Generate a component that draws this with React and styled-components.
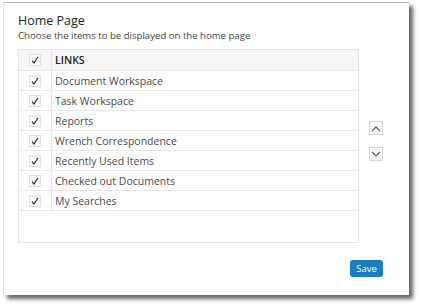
import React from "react";
import styled, { createGlobalStyle } from "styled-components";

const Global = createGlobalStyle`
  html, body { margin: 0; padding: 0; background: #fff; }
  body { font-family: "Open Sans", "Liberation Sans", sans-serif; }
`;

const Page = styled.div`
  width: 423px;
  height: 308px;
  padding: 2px 0 0 3px;
  box-sizing: border-box;
`;

const Panel = styled.div`
  width: 406px;
  height: 293px;
  box-sizing: border-box;
  background: #fff;
  border-top: 1px solid #b5b5b5;
  border-left: 1px solid #e2e2e2;
  box-shadow: 4px 4px 4px rgba(0, 0, 0, 0.6);
  padding: 9px 0 0 14px;
  display: flex;
  flex-direction: column;
`;

const Title = styled.div`
  font-size: 12.5px;
  line-height: 17px;
  color: #222;
  font-weight: 500;
`;

const Subtitle = styled.div`
  font-size: 9.6px;
  line-height: 13px;
  color: #444;
  margin-bottom: 7px;
`;

const Body = styled.div`
  display: flex;
  align-items: flex-start;
`;

const Table = styled.div`
  width: 341px;
  height: 194px;
  box-sizing: border-box;
  border: 1px solid #e4e4e4;
  display: flex;
  flex-direction: column;
`;

const Row = styled.div`
  display: flex;
  height: ${(p) => (p.$header ? 21 : 20)}px;
  flex: 0 0 auto;
  border-bottom: 1px solid #e8e8e8;
  background: ${(p) => (p.$header ? "#f6f6f6" : "#fff")};
  box-sizing: border-box;
`;

const CheckCell = styled.div`
  width: 32px;
  flex: 0 0 32px;
  border-right: 1px solid #e4e4e4;
  display: flex;
  align-items: center;
  justify-content: center;
`;

const Box = styled.span`
  width: 12px;
  height: 12px;
  box-sizing: border-box;
  border: 1px solid #e0e0e0;
  background: #fafafa;
  display: flex;
  align-items: center;
  justify-content: center;
`;

const LabelCell = styled.div`
  flex: 1;
  display: flex;
  align-items: center;
  padding-left: 3px;
  font-size: 10.5px;
  font-weight: ${(p) => (p.$header ? 600 : 400)};
  color: ${(p) => (p.$header ? "#222" : "#4a4a4a")};
`;

const Arrows = styled.div`
  display: flex;
  flex-direction: column;
  gap: 12px;
  margin: 72px 0 0 10px;
`;

const ArrowBtn = styled.div`
  width: 14px;
  height: 14px;
  box-sizing: border-box;
  border: 1px solid #d4d4d4;
  background: #fafafa;
  display: flex;
  align-items: center;
  justify-content: center;
`;

const Footer = styled.div`
  display: flex;
  justify-content: flex-end;
  width: 365px;
  margin-top: 17px;
`;

const SaveButton = styled.button`
  width: 33px;
  height: 17px;
  padding: 0;
  border: none;
  border-radius: 3px;
  background: #1a7cc1;
  color: #fff;
  font-family: "Open Sans", "Liberation Sans", sans-serif;
  font-size: 9.5px;
  line-height: 17px;
`;

const items = [
  "Document Workspace",
  "Task Workspace",
  "Reports",
  "Wrench Correspondence",
  "Recently Used Items",
  "Checked out Documents",
  "My Searches",
];

const Check = () => (
  <svg width="8" height="8" viewBox="0 0 8 8">
    <path d="M1 4.6 L3 7 L7 0.8" fill="none" stroke="#222" strokeWidth="1.1" />
  </svg>
);

const Chevron = ({ up }) => (
  <svg width="10" height="7" viewBox="0 0 10 7">
    <path
      d={up ? "M1 6 L5 2 L9 6" : "M1 1 L5 5 L9 1"}
      fill="none"
      stroke="#555"
      strokeWidth="1.1"
    />
  </svg>
);

export default function App() {
  return (
    <>
      <Global />
      <Page>
        <Panel>
          <Title>Home Page</Title>
          <Subtitle>Choose the items to be displayed on the home page</Subtitle>
          <Body>
            <Table>
              <Row $header>
                <CheckCell>
                  <Box>
                    <Check />
                  </Box>
                </CheckCell>
                <LabelCell $header>LINKS</LabelCell>
              </Row>
              {items.map((it) => (
                <Row key={it}>
                  <CheckCell>
                    <Box>
                      <Check />
                    </Box>
                  </CheckCell>
                  <LabelCell>{it}</LabelCell>
                </Row>
              ))}
            </Table>
            <Arrows>
              <ArrowBtn>
                <Chevron up />
              </ArrowBtn>
              <ArrowBtn>
                <Chevron />
              </ArrowBtn>
            </Arrows>
          </Body>
          <Footer>
            <SaveButton>Save</SaveButton>
          </Footer>
        </Panel>
      </Page>
    </>
  );
}
